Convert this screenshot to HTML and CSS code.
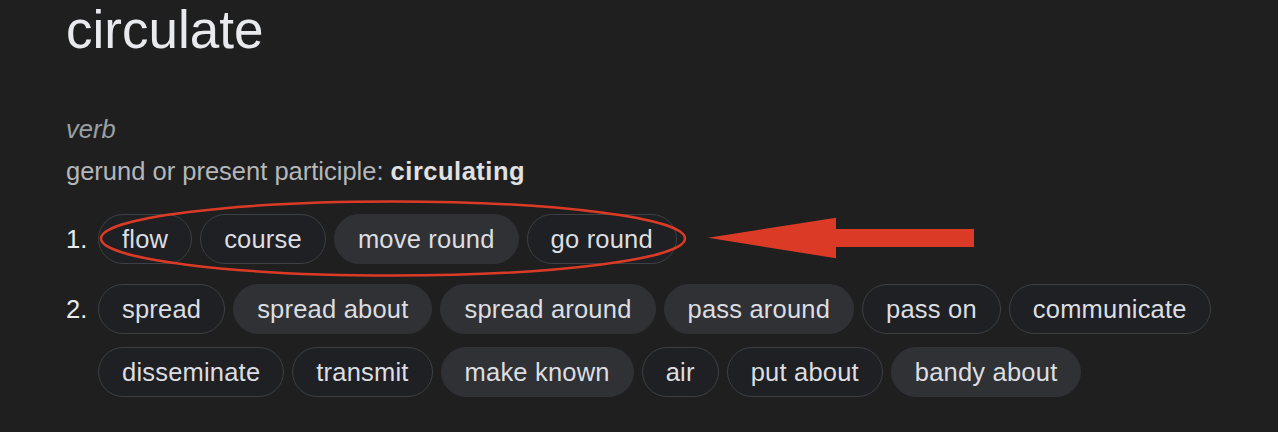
FILE: index.html
```html
<!DOCTYPE html>
<html lang="en">
<head>
    <meta charset="UTF-8">
    <title>circulate</title>
    <link rel="stylesheet" href="styles.css">
</head>
<body>
    <div class="entry">
        <h1 class="headword">circulate</h1>
        <div class="pos">verb</div>
        <div class="forms">gerund or present participle: <b>circulating</b></div>

        <ol class="senses">
            <li class="sense">
                <span class="num">1.</span>
                <div class="chips">
                    <span class="chip">flow</span>
                    <span class="chip">course</span>
                    <span class="chip filled">move round</span>
                    <span class="chip">go round</span>
                </div>
            </li>
            <li class="sense">
                <span class="num">2.</span>
                <div class="chips">
                    <span class="chip">spread</span>
                    <span class="chip filled">spread about</span>
                    <span class="chip filled">spread around</span>
                    <span class="chip filled">pass around</span>
                    <span class="chip">pass on</span>
                    <span class="chip">communicate</span>
                    <span class="chip">disseminate</span>
                    <span class="chip">transmit</span>
                    <span class="chip filled">make known</span>
                    <span class="chip">air</span>
                    <span class="chip">put about</span>
                    <span class="chip filled">bandy about</span>
                </div>
            </li>
        </ol>
    </div>

    <!-- red annotation drawn over the page -->
    <svg class="markup" width="1278" height="432" viewBox="0 0 1278 432">
        <ellipse cx="393" cy="238.5" rx="292" ry="37" fill="none" stroke="#db3b26" stroke-width="2.5"/>
        <polygon points="708,237.7 836,217.7 836,229 974,229 974,247 836,247 836,258.3" fill="#db3b26"/>
    </svg>
</body>
</html>
```

FILE: styles.css
```css
/* Reset */
* {
    margin: 0;
    padding: 0;
    box-sizing: border-box;
}

body {
    font-family: "Liberation Sans", Arial, sans-serif;
    background: #1f1f1f;
    color: #b4b7bb;
    width: 1278px;
    height: 432px;
    overflow: hidden;
    position: relative;
}

/* Entry */
.entry {
    padding-left: 66px;
}

.headword {
    font-size: 53px;
    font-weight: normal;
    line-height: 60px;
    color: #e8eaed;
}

.pos {
    margin-top: 48px;
    font-size: 25.5px;
    line-height: 42px;
    font-style: italic;
    color: #9aa0a6;
}

.forms {
    font-size: 25.5px;
    line-height: 42px;
}

.forms b {
    color: #e0e1e3;
    letter-spacing: 0.5px;
}

/* Senses */
.senses {
    list-style: none;
    margin-top: 22px;
}

.sense {
    display: grid;
    grid-template-columns: 32px 1fr;
    font-size: 25.5px;
}

.sense + .sense {
    margin-top: 20px;
}

.num {
    line-height: 50px;
    color: #e8eaed;
}

.chips {
    display: flex;
    flex-wrap: wrap;
    column-gap: 8px;
    row-gap: 13px;
}

/* Chips */
.chip {
    height: 50px;
    line-height: 48px;
    padding: 0 23px;
    border: 1px solid #3c4043;
    border-radius: 25px;
    background: #1f2023;
    color: #dcdee1;
    letter-spacing: 0.2px;
    white-space: nowrap;
}

.chip.filled {
    background: #303134;
    border-color: #303134;
}

/* Annotation */
.markup {
    position: absolute;
    top: 0;
    left: 0;
    pointer-events: none;
}
```
